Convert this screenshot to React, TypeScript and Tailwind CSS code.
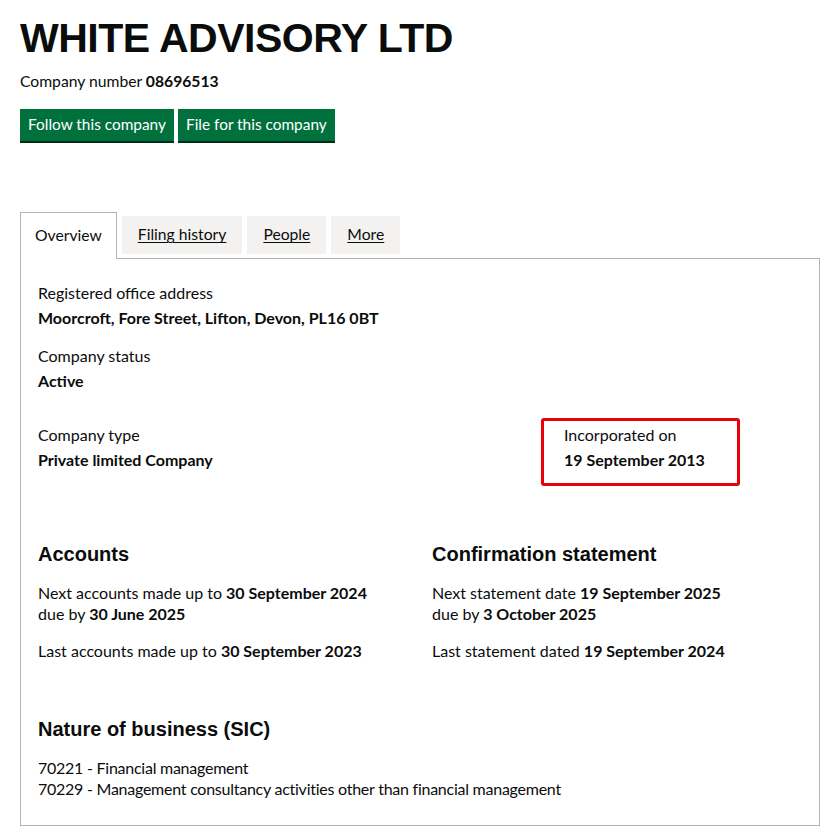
import React from 'react';

const tabs = ['Filing history', 'People', 'More'];

export default function App() {
  return (
    <div className="min-h-screen bg-white pl-5 text-[#0b0c0c]" style={{ fontFamily: 'Lato, "Liberation Sans", sans-serif' }}>
      {/* Header */}
      <h1 className="pt-[15px] font-['Liberation_Sans',Arial,sans-serif] text-[41px] font-bold leading-[46px] tracking-[-0.5px]">
        WHITE ADVISORY LTD
      </h1>
      <p className="mt-[10px] text-[15.7px] leading-[21px]">
        Company number <strong className="font-bold">08696513</strong>
      </p>
      <div className="mt-[17px] flex gap-1">
        <button className="h-8 bg-[#00703c] px-2 text-[15.4px] text-white shadow-[0_2px_0_#002d18]">Follow this company</button>
        <button className="h-8 bg-[#00703c] px-2 text-[15.4px] text-white shadow-[0_2px_0_#002d18]">File for this company</button>
      </div>

      {/* Tabs */}
      <div className="mt-[71px] w-[800px]">
        <div className="flex items-start gap-[5px]">
          <div className="relative z-10 -mb-px flex h-[47px] items-center border border-b-0 border-[#b1b4b6] bg-white px-[14px] text-[15.7px]">
            Overview
          </div>
          {tabs.map((t) => (
            <a key={t} href="#" className="mt-1 flex h-[38px] items-center bg-[#f3f2f1] px-4 text-[15.7px] underline underline-offset-2">
              {t}
            </a>
          ))}
        </div>

        {/* Panel */}
        <div className="border border-[#b1b4b6] px-[17px] pt-[23px] pb-[26px] text-[16px] leading-[21px]">
          <dl>
            <dt>Registered office address</dt>
            <dd className="mt-1 font-bold">Moorcroft, Fore Street, Lifton, Devon, PL16 0BT</dd>
          </dl>
          <dl className="mt-[17px]">
            <dt>Company status</dt>
            <dd className="mt-1 font-bold">Active</dd>
          </dl>

          <div className="mt-[27px] flex items-start">
            <dl className="mt-[6px] w-[503px]">
              <dt>Company type</dt>
              <dd className="mt-1 font-bold">Private limited Company</dd>
            </dl>
            <div className="h-[68px] w-[199px] rounded-[3px] border-[3px] border-[#e8000b] pl-[20px] pt-[3px]">
              <dl>
                <dt>Incorporated on</dt>
                <dd className="mt-1 font-bold">19 September 2013</dd>
              </dl>
            </div>
          </div>

          <div className="mt-[56px] grid grid-cols-[394px_1fr]">
            <div>
              <h2 className="font-['Liberation_Sans',Arial,sans-serif] text-[20px] font-bold leading-[25px]">Accounts</h2>
              <p className="mt-[15px]">
                Next accounts made up to <strong>30 September 2024</strong>
                <br />
                due by <strong>30 June 2025</strong>
              </p>
              <p className="mt-4">
                Last accounts made up to <strong>30 September 2023</strong>
              </p>
            </div>
            <div>
              <h2 className="font-['Liberation_Sans',Arial,sans-serif] text-[20px] font-bold leading-[25px]">Confirmation statement</h2>
              <p className="mt-[15px]">
                Next statement date <strong>19 September 2025</strong>
                <br />
                due by <strong>3 October 2025</strong>
              </p>
              <p className="mt-4">
                Last statement dated <strong>19 September 2024</strong>
              </p>
            </div>
          </div>

          <h2 className="mt-[56px] font-['Liberation_Sans',Arial,sans-serif] text-[20px] font-bold leading-[25px]">
            Nature of business (SIC)
          </h2>
          <ul className="mt-[15px] tracking-[-0.25px]">
            <li>70221 - Financial management</li>
            <li>70229 - Management consultancy activities other than financial management</li>
          </ul>
        </div>
      </div>
    </div>
  );
}
